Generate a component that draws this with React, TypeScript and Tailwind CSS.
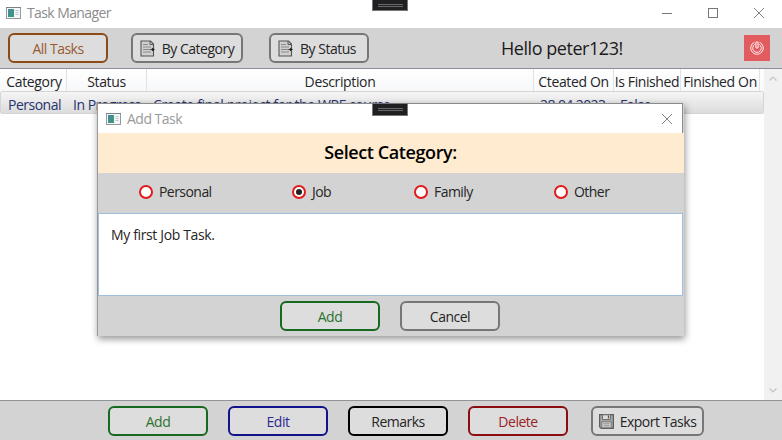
import type { ReactNode } from "react";

function AppIcon() {
  return (
    <svg width="15" height="12" viewBox="0 0 15 12" className="shrink-0">
      <defs>
        <linearGradient id="screen" x1="0" y1="0" x2="1" y2="1">
          <stop offset="0" stopColor="#4787a8" />
          <stop offset="1" stopColor="#3f9a70" />
        </linearGradient>
      </defs>
      <rect x="0.5" y="0.5" width="14" height="11" fill="#f5f7f9" stroke="#93999f" />
      <path d="M0 0.5h15" stroke="#7b838a" />
      <rect x="2" y="2" width="6" height="8" fill="url(#screen)" />
      <path d="M9.5 3.5h3M9.5 5.5h3M9.5 7.5h3" stroke="#bcc5cc" />
    </svg>
  );
}

function DocIcon() {
  return (
    <svg width="15" height="17" viewBox="0 0 15 17" className="-mt-px shrink-0">
      <path d="M1 1h9.5l3 3v12H1z" fill="#d0d0d0" stroke="#555" strokeWidth="1.1" />
      <path d="M10 1v3.5h3.5" fill="none" stroke="#555" />
      <path d="M3 4.5h5M3 7h8M3 9.5h8M3 12h8" stroke="#8a8a8a" />
      <path d="M10.5 9.5h2.5" stroke="#333" strokeWidth="1.2" />
      <path d="M12 7.7l3 1.8-3 1.8z" fill="#222" />
    </svg>
  );
}

function SaveIcon() {
  return (
    <svg width="15" height="15" viewBox="0 0 15 15" className="-mt-px shrink-0">
      <path d="M0.6 0.6h13.8v13.8H2.2L0.6 12.8z" fill="#a5a5a5" stroke="#5c5c5c" strokeWidth="1.2" />
      <path d="M3.5 0.8h8v4.7h-8z" fill="#dcdcdc" stroke="#707070" />
      <path d="M9.5 1.5v3" stroke="#555" strokeWidth="1.3" />
      <path d="M2.8 7.8h9.4v6H2.8z" fill="#d4d4d4" stroke="#777" />
      <path d="M4.5 9.8h6M4.5 11.8h6" stroke="#8c8c8c" />
    </svg>
  );
}

function DebugTab({ className }: { className: string }) {
  return (
    <div className={`absolute flex w-[36px] items-center justify-center border border-[#77777a] bg-[#202022] ${className}`}>
      <div className="h-[3px] w-[25px] border-y border-[#69696b]" />
    </div>
  );
}

function CloseIcon() {
  return (
    <svg width="10" height="10" viewBox="0 0 10 10">
      <path d="M0 0l10 10M10 0L0 10" stroke="#777" strokeWidth="0.9" />
    </svg>
  );
}

function Button({ className, children }: { className: string; children: ReactNode }) {
  return (
    <button className={`flex h-[30px] shrink-0 items-center justify-center rounded-[6px] border-2 bg-[#dddddd] pt-[2px] tracking-[-0.5px] whitespace-nowrap ${className}`}>
      {children}
    </button>
  );
}

function Radio({ label, checked, className }: { label: string; checked?: boolean; className: string }) {
  return (
    <div className={`flex items-center gap-[6px] tracking-[-0.55px] ${className}`}>
      <span className="flex size-[14px] shrink-0 items-center justify-center rounded-full border-2 border-[#e31b1b] bg-white">
        {checked && <span className="size-[6px] rounded-full bg-[#212121]" />}
      </span>
      <span className="pt-px">{label}</span>
    </div>
  );
}

function Dialog() {
  return (
    <div className="absolute top-[103px] left-[97px] flex h-[233px] w-[587px] flex-col border-l border-[#999] bg-[#d3d3d3] shadow-[1px_3px_7px_rgba(0,0,0,0.42)]">
      <div className="mr-px flex h-[30px] items-center border-t border-r border-[#8b8b8b] bg-white pr-[10px] pl-[8px]">
        <AppIcon />
        <span className="ml-[6px] flex-1 text-[14px] tracking-[-0.5px] text-[#9a9a9a]">Add Task</span>
        <CloseIcon />
      </div>
      <div className="flex h-[40px] items-center justify-center bg-[#ffebcf] pr-px pb-[3px] text-[18px] font-semibold tracking-[-0.4px] text-black">
        Select Category:
      </div>
      <div className="flex h-[40px] items-center pb-[3px] pl-[41px]">
        <Radio label="Personal" className="w-[153px]" />
        <Radio label="Job" checked className="w-[122px]" />
        <Radio label="Family" className="w-[140px]" />
        <Radio label="Other" className="w-[100px]" />
      </div>
      <div className="mr-px h-[83px] border border-[#9fbfde] bg-white pt-[12px] pl-[12px]">My first Job Task.</div>
      <div className="flex h-[40px] justify-center gap-[20px] pt-[5px] pr-[2px]">
        <Button className="w-[100px] border-[#16691e] text-[#2d722d]">Add</Button>
        <Button className="w-[100px] border-[#777]">Cancel</Button>
      </div>
      <DebugTab className="top-0 left-[274px] h-[13px]" />
    </div>
  );
}

const columns = [
  { title: "Category", className: "w-[65px]" },
  { title: "Status", className: "w-[80px]" },
  { title: "Description", className: "w-[387px]" },
  { title: "Cteated On", className: "w-[80px]" },
  { title: "Is Finished", className: "w-[67px] tracking-[-0.4px]" },
  { title: "Finished On", className: "w-[79px]" },
];

export default function App() {
  return (
    <div className="relative flex h-[440px] w-[782px] flex-col overflow-hidden bg-white font-['Open_Sans','Noto_Sans',sans-serif] text-[14px] leading-[18px] tracking-[-0.36px] text-[#252525]">
      <div className="flex h-[28px] shrink-0 items-center pr-[18px] pb-[2px] pl-[6px]">
        <AppIcon />
        <span className="ml-[6px] flex-1 text-[14px] tracking-[-0.6px] text-[#8c8c8c]">Task Manager</span>
        <div className="flex items-center gap-[36px]">
          <div className="h-px w-[10px] bg-[#777]" />
          <div className="size-[10px] border border-[#777]" />
          <CloseIcon />
        </div>
      </div>

      <div className="flex h-[41px] shrink-0 items-start border-b border-[#8c8c9a] bg-[#d3d3d3] pt-[5px] pl-[8px]">
        <Button className="w-[100px] border-[#8b4b19] text-[#985b31]">All Tasks</Button>
        <Button className="ml-[23px] w-[112px] gap-[7px] border-[#777]">
          <DocIcon />
          By Category
        </Button>
        <Button className="ml-[26px] w-[100px] gap-[7px] border-[#777] pr-[4px]">
          <DocIcon />
          By Status
        </Button>
        <span className="ml-[132px] w-[243px] pt-[2px] text-[18px] leading-[26px] tracking-[-0.45px] text-[#1a1a1a]">Hello peter123!</span>
        <div className="mt-[2px] flex size-[26px] items-center justify-center bg-[#e25b5e]">
          <svg width="14" height="14" viewBox="0 0 14 14" fill="none" stroke="#fff" strokeWidth="1">
            <path d="M4.5 1.2a6.3 6.3 0 1 0 5 0" opacity="0.9" />
            <path d="M4.7 3.4a4.3 4.3 0 1 0 4.6 0" opacity="0.9" />
            <rect x="5.9" y="0.8" width="2.2" height="6.4" rx="1.1" />
          </svg>
        </div>
      </div>

      <div className="flex h-[331px] shrink-0">
        <div className="flex w-[764px] flex-col">
          <div className="flex h-[22px] shrink-0 bg-linear-to-b from-white to-[#f7f8fa] pl-[2px]">
            {columns.map((c) => (
              <div key={c.title} className={`flex shrink-0 items-center justify-center border-r border-[#e0e2e8] pt-[4px] whitespace-nowrap ${c.className}`}>
                {c.title}
              </div>
            ))}
          </div>
          <div className="flex h-[23px] w-[764px] shrink-0 items-center rounded-[2px] border border-[#d5d5d5] bg-linear-to-b from-[#f5f5f5] to-[#dcdcdc] pt-[4px] pl-[7px] whitespace-nowrap text-[#27336f]">
            <span className="w-[65px] tracking-[-0.5px]">Personal</span>
            <span className="w-[80px] tracking-[-0.5px]">In Progress</span>
            <span className="w-[387px]">Create final project for the WPF course.</span>
            <span className="w-[80px] tracking-[-0.6px]">28.04.2023</span>
            <span>False</span>
          </div>
        </div>
        <div className="flex w-[18px] flex-col items-center justify-between bg-[#f1f1f1] py-[7px]">
          <svg width="8" height="5" viewBox="0 0 8 5" fill="none" stroke="#c4c4c4" strokeWidth="1.2">
            <path d="M0.5 4.5L4 1l3.5 3.5" />
          </svg>
          <svg width="8" height="5" viewBox="0 0 8 5" fill="none" stroke="#c4c4c4" strokeWidth="1.2">
            <path d="M0.5 0.5L4 4l3.5-3.5" />
          </svg>
        </div>
      </div>

      <div className="flex h-[40px] shrink-0 gap-[20px] border-t border-[#909498] bg-[#d3d3d3] pt-[5px] pl-[108px]">
        <Button className="w-[100px] border-[#16691e] text-[#2d722d]">Add</Button>
        <Button className="w-[100px] border-[#12128b] text-[#2a2a94]">Edit</Button>
        <Button className="w-[100px] border-black">Remarks</Button>
        <Button className="w-[100px] border-[#8b0d12] text-[#9a2226]">Delete</Button>
        <Button className="ml-[3px] w-[113px] gap-[6px] border-[#777]">
          <SaveIcon />
          Export Tasks
        </Button>
      </div>

      <DebugTab className="top-[-1px] left-[372px] h-[12px]" />
      <Dialog />
    </div>
  );
}
